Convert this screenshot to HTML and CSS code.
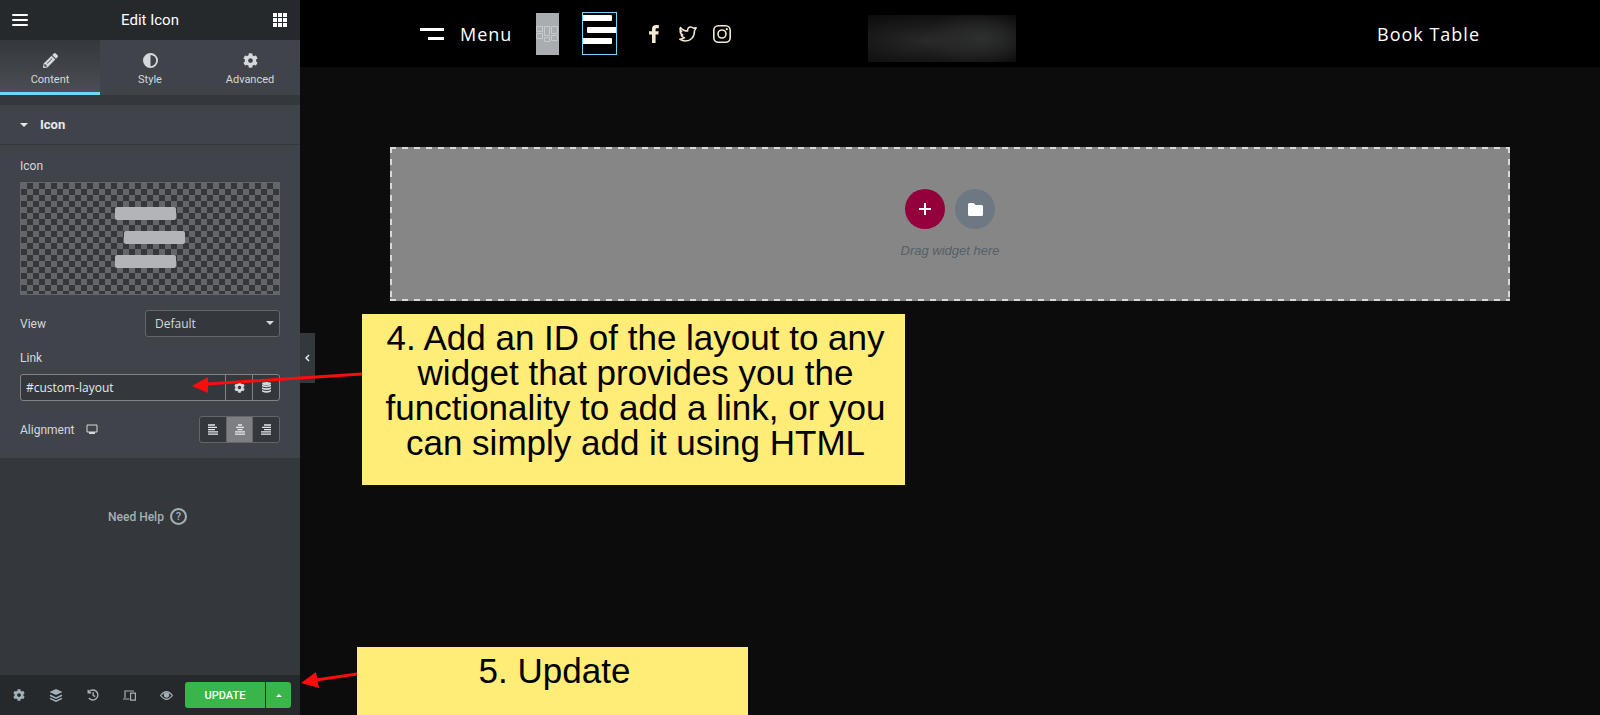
FILE: index.html
```html
<!DOCTYPE html>
<html lang="en">
<head>
  <meta charset="UTF-8">
  <meta name="viewport" content="width=device-width, initial-scale=1.0">
  <title>Edit Icon</title>
  <link rel="stylesheet" href="styles.css">
</head>
<body>
  <!-- shared icons -->
  <svg class="defs" aria-hidden="true">
    <symbol id="i-gear" viewBox="0 0 512 512"><path d="M487.4 315.7l-42.600-24.600c4.300-23.200 4.300-47 0-70.200l42.600-24.600c4.900-2.800 7.100-8.600 5.500-14-11.100-35.600-30-67.800-54.700-94.600-3.800-4.100-10-5.100-14.800-2.300L380.800 110c-17.900-15.400-38.500-27.300-60.800-35.100V25.800c0-5.600-3.900-10.500-9.400-11.700-36.700-8.200-74.300-7.800-109.200 0-5.500 1.200-9.400 6.100-9.400 11.700V75c-22.200 7.900-42.800 19.800-60.800 35.100L88.700 85.500c-4.900-2.800-11-1.900-14.800 2.300-24.700 26.700-43.600 58.900-54.700 94.600-1.700 5.400.6 11.200 5.500 14L67.300 221c-4.300 23.200-4.300 47 0 70.200l-42.600 24.600c-4.900 2.800-7.100 8.600-5.500 14 11.100 35.600 30 67.800 54.700 94.600 3.800 4.100 10 5.100 14.800 2.300l42.600-24.600c17.900 15.400 38.500 27.300 60.800 35.100v49.200c0 5.600 3.900 10.500 9.400 11.700 36.700 8.200 74.300 7.800 109.200 0 5.500-1.200 9.400-6.100 9.400-11.700v-49.200c22.200-7.900 42.800-19.800 60.800-35.100l42.600 24.600c4.900 2.800 11 1.900 14.800-2.300 24.700-26.700 43.600-58.900 54.700-94.600 1.500-5.500-.7-11.300-5.600-14.100zM256 336c-44.100 0-80-35.900-80-80s35.900-80 80-80 80 35.900 80 80-35.900 80-80 80z"/></symbol>
  </svg>

  <div class="editor">
    <aside class="panel">
      <header class="panel-header">
        <button class="icon-btn" aria-label="Menu">
          <svg width="16" height="12" viewBox="0 0 16 12"><path d="M1 1h14M1 6h14M1 11h14" stroke="#fff" stroke-width="2" stroke-linecap="round"/></svg>
        </button>
        <h1>Edit Icon</h1>
        <button class="icon-btn" aria-label="Widgets">
          <svg width="14" height="14" viewBox="0 0 14 14"><path d="M0 0h4v4H0zM5 0h4v4H5zM10 0h4v4h-4zM0 5h4v4H0zM5 5h4v4H5zM10 5h4v4h-4zM0 10h4v4H0zM5 10h4v4H5zM10 10h4v4h-4z"/></svg>
        </button>
      </header>

      <nav class="tabs">
        <button class="tab active">
          <svg width="15" height="15" viewBox="0 0 512 512"><path d="M498 142l-46 46c-5 5-12 5-17 0L324 77c-5-5-5-12 0-17l46-46c19-19 49-19 68 0l60 60c19 19 19 49 0 68zm-214-42L22 362 .3 484c-3 16 11 31 28 28l122-21 262-262c5-5 5-12 0-17L301 100c-5-5-12-5-17 0zM134 350l170-170 14 14-170 170zM88 424h48v36l-65 12-31-31 12-65h36z" fill-rule="evenodd"/></svg>
          Content
        </button>
        <button class="tab">
          <svg width="15" height="15" viewBox="0 0 16 16"><path fill-rule="evenodd" d="M8 0a8 8 0 1 0 0 16A8 8 0 0 0 8 0zm0 14V2a6 6 0 0 1 0 12z"/></svg>
          Style
        </button>
        <button class="tab">
          <svg width="15" height="15"><use href="#i-gear"/></svg>
          Advanced
        </button>
      </nav>

      <button class="section-title">
        <svg width="8" height="4" viewBox="0 0 8 4"><path d="M0 0h8L4 4z"/></svg>
        Icon
      </button>

      <div class="controls">
        <div class="label">Icon</div>
        <div class="media">
          <svg width="70" height="61" viewBox="0 0 70 61" fill="#b3b4b7"><rect width="61" height="13" rx="2"/><rect x="9" y="24" width="61" height="13" rx="2"/><rect y="48" width="61" height="13" rx="2"/></svg>
        </div>

        <div class="control-row">
          <label for="view">View</label>
          <div class="select-wrap">
            <select id="view"><option>Default</option></select>
            <svg width="8" height="4" viewBox="0 0 8 4"><path d="M0 0h8L4 4z"/></svg>
          </div>
        </div>

        <label class="label" for="link">Link</label>
        <div class="link-box">
          <input id="link" type="text" value="#custom-layout">
          <button aria-label="Link options"><svg width="11" height="11"><use href="#i-gear"/></svg></button>
          <button aria-label="Dynamic tags"><svg width="9" height="11" viewBox="0 0 9 11"><ellipse cx="4.500" cy="1.500" rx="4.500" ry="1.500"/><path d="M0 2.500q4.500 2 9 0v1.700q-4.500 2-9 0zM0 5.200q4.500 2 9 0v1.700q-4.500 2-9 0zM0 7.900q4.500 2 9 0v1.600q-4.500 2.600-9 0z"/></svg></button>
        </div>

        <div class="control-row">
          <span class="device-label">Alignment
            <svg width="12" height="11" viewBox="0 0 12 11"><path d="M1 1h10v7H1z" fill="none" stroke="#d5d8dc"/><path d="M3 8h6v2H3z"/></svg>
          </span>
          <div class="align-group">
            <button aria-label="Left"><svg width="12" height="11" viewBox="0 0 12 11"><path d="M1 1h7M1 3.300h9M1 5.600h7M1 7.900h10M1 10.200h10"/></svg></button>
            <button class="on" aria-label="Center"><svg width="12" height="11" viewBox="0 0 12 11"><path d="M4 1h4M2 3.300h8M3.500 5.600h5M1 7.900h10M1 10.200h10"/></svg></button>
            <button aria-label="Right"><svg width="12" height="11" viewBox="0 0 12 11"><path d="M4 1h7M2 3.300h9M4 5.600h7M1 7.900h10M1 10.200h10"/></svg></button>
          </div>
        </div>
      </div>

      <a class="help" href="#">Need Help <span>?</span></a>

      <footer class="panel-footer">
        <button class="tool" aria-label="Settings"><svg width="12" height="12"><use href="#i-gear"/></svg></button>
        <button class="tool" aria-label="Navigator"><svg width="14" height="13" viewBox="0 0 14 13"><path d="M7 0l6.500 3L7 6 .5 3z"/><path d="M1 6.300l6 2.800 6-2.800M1 9.400l6 2.800 6-2.800" fill="none" stroke="#a4afb7" stroke-width="1.500"/></svg></button>
        <button class="tool" aria-label="History"><svg width="12" height="12" viewBox="0 0 12 12" fill="none" stroke="#a4afb7" stroke-width="1.400"><path d="M1.700 3.200a5 5 0 1 1 .2 5.800M1.200.8v3h3M6.200 3.200v3.200l2 1.300"/></svg></button>
        <button class="tool" aria-label="Responsive"><svg width="13" height="11" viewBox="0 0 13 11" fill="none" stroke="#a4afb7" stroke-width="1.200"><path d="M2 8V1h9M0 9h6.500M7.600 3.200h4.800v7H7.600z"/></svg></button>
        <button class="tool" aria-label="Preview"><svg width="13" height="9" viewBox="0 0 13 9"><path d="M.6 4.500Q6.500-3.300 12.400 4.500 6.500 12.300.6 4.500z" fill="none" stroke="#a4afb7" stroke-width="1.200"/><circle cx="6.500" cy="4" r="2.700"/></svg></button>
        <button class="update">UPDATE</button>
        <button class="update-more" aria-label="Save options"><svg width="6" height="3" viewBox="0 0 6 3"><path d="M0 3h6L3 0z"/></svg></button>
      </footer>
    </aside>

    <main class="preview">
      <header class="site-header">
        <div class="site-left">
          <a class="menu-link" href="#">
            <svg width="24" height="12" viewBox="0 0 24 12"><path d="M0 0h24v3H0zM8 9h16v3H8z"/></svg>
            Menu
          </a>
          <div class="widget-handle">
            <svg width="23" height="18" viewBox="0 0 23 18" fill="none" stroke="#c6cace"><path d="M.5 1.500h6v5h-6zM.5 8.500h6v5h-6zM8.500 1.500h5v9h-5zM8.500 12.500h5v4h-5zM15.500 1.500h6v7h-6zM15.500 10.500h6v5h-6z"/></svg>
          </div>
          <a class="icon-widget" href="#custom-layout" aria-label="Custom layout">
            <svg width="33" height="32" viewBox="0 0 33 32"><rect x="-2" y="2" width="31" height="6" rx="1"/><rect x="4" y="14" width="31" height="6" rx="1"/><rect x="-2" y="25" width="31" height="6" rx="1"/></svg>
          </a>
          <div class="social">
            <a href="#" aria-label="Facebook"><svg width="20" height="20" viewBox="0 0 20 20"><path d="M8 19v-8.500H5V7.300h3V5c0-3 1.600-4 4-4h2.800v3.200H13c-1 0-1.400.4-1.400 1.300v1.800h3.100l-.4 3.200h-2.700V19z"/></svg></a>
            <a href="#" aria-label="Twitter"><svg width="20" height="20" viewBox="0 0 20 20" fill="none" stroke="#f3ead3" stroke-width="1.500" stroke-linejoin="round"><path d="M2.400 3.500c2 2.400 4.300 3.600 7.300 3.600C9.200 4.500 10.800 3 12.700 3c1.200 0 2.200.5 2.900 1.300l2.600-.6-1.800 3.300C16.700 13 12.500 17 7.500 17c-2.200 0-4.200-.6-5.800-1.800 2.200 0 3.600-.5 4.800-1.500-1.900-.3-2.900-1.400-3.300-2.700h1.500C3 10 2 8.500 2.200 7.200l1.500.4C2.200 6.500 1.600 5 2.400 3.500z"/></svg></a>
            <a href="#" aria-label="Instagram"><svg width="20" height="20" viewBox="0 0 20 20"><rect x="1.800" y="1.800" width="16.400" height="16.400" rx="4.500" fill="none" stroke="#f3ead3" stroke-width="1.600"/><circle cx="10" cy="10" r="4" fill="none" stroke="#f3ead3" stroke-width="1.600"/><circle cx="14.800" cy="5.200" r="1.100"/></svg></a>
          </div>
        </div>
        <div class="logo"></div>
        <a class="book" href="#">Book Table</a>
      </header>

      <section class="drop-zone">
        <div class="drop-buttons">
          <button class="add" aria-label="Add section"><svg width="12" height="12" viewBox="0 0 12 12"><path d="M5 0h2v5h5v2H7v5H5V7H0V5h5z"/></svg></button>
          <button class="folder" aria-label="Add template"><svg width="15" height="13" viewBox="0 0 15 13"><path d="M1.500 0h4l2 2h6A1.500 1.500 0 0 1 15 3.500v8a1.500 1.500 0 0 1-1.500 1.500h-12A1.500 1.500 0 0 1 0 11.500v-10A1.500 1.500 0 0 1 1.500 0z"/></svg></button>
        </div>
        <p>Drag widget here</p>
      </section>

      <button class="collapse" aria-label="Hide panel"><svg width="5" height="8" viewBox="0 0 5 8"><path d="M4 1L1 4l3 3" fill="none" stroke="#e6e9ec" stroke-width="1.500"/></svg></button>

      <div class="note note-link">4. Add an ID of the layout to any widget that provides you the functionality to add a link, or you can simply add it using HTML
        <svg class="arrow" width="170" height="26" viewBox="0 0 170 26"><path d="M170 6L15 16" stroke="#f90d0d" stroke-width="3"/><path d="M0 18L16 9v16z"/></svg>
      </div>
      <div class="note note-update">5. Update
        <svg class="arrow" width="56" height="20" viewBox="0 0 56 20"><path d="M56 5L15 11" stroke="#f90d0d" stroke-width="3"/><path d="M0 14L15 3l3 16z"/></svg>
      </div>
    </main>
  </div>
</body>
</html>
```
FILE: styles.css
```css
* { box-sizing: border-box; }
body { margin: 0; background: #0c0c0c; font-family: Roboto, "Liberation Sans", sans-serif; font-size: 12px; color: #d5d8dc; }
button { border: 0; padding: 0; margin: 0; background: none; color: inherit; font: inherit; cursor: pointer; }
a { color: inherit; text-decoration: none; }
svg { display: block; }
svg:not([fill]) { fill: currentColor; }
.defs { position: absolute; width: 0; height: 0; }

.editor { display: flex; height: 100vh; overflow: hidden; }

/* panel */
.panel { width: 300px; flex: none; display: flex; flex-direction: column; background: #34383c; }
.panel-header { height: 40px; flex: none; display: flex; align-items: center; justify-content: space-between; padding: 0 12px; background: #26292c; color: #fff; }
.panel-header h1 { margin: 0; font-size: 15px; font-weight: 400; }
.icon-btn { width: 16px; height: 40px; display: flex; align-items: center; justify-content: center; }

.tabs { display: flex; flex: none; height: 55px; margin-bottom: 10px; background: #404349; }
.tab { flex: 1; display: flex; flex-direction: column; align-items: center; gap: 5px; padding-top: 13px; font-size: 11px; line-height: 14px; border-bottom: 3px solid transparent; }
.tab.active { background: linear-gradient(#34383c, #4b4f55); border-bottom-color: #71d7f7; }

.section-title { display: flex; align-items: center; gap: 12px; flex: none; height: 40px; padding: 0 20px; background: #404349; border-bottom: 1px solid #34383c; font-size: 13px; font-weight: 700; color: #e6e9ec; }
.controls { flex: none; padding: 13px 20px 15px; background: #404349; }
.label { display: block; height: 16px; line-height: 16px; margin-bottom: 8px; }
.media { display: flex; align-items: center; justify-content: center; height: 113px; padding-bottom: 2px; border: 1px solid #64666a; background: repeating-conic-gradient(#34383c 0 25%, #64666a 0 50%) 0 0 / 12px 12px; }
.control-row { display: flex; align-items: center; justify-content: space-between; margin: 15px 0 13px; }
.controls > :last-child { margin-bottom: 0; }

.select-wrap { position: relative; width: 135px; }
.select-wrap svg { position: absolute; right: 6px; top: 11px; pointer-events: none; }
select { appearance: none; width: 100%; height: 27px; padding: 0 9px; border: 1px solid #64666a; border-radius: 3px; background: #34383c; color: #d5d8dc; font-family: "Open Sans", sans-serif; font-size: 12px; }
.link-box { display: flex; height: 27px; border: 1px solid #818388; border-radius: 3px; background: #34383c; overflow: hidden; }
.link-box input { flex: 1; min-width: 0; border: 0; padding: 0 5px; background: none; color: #e6e9ec; font-family: "Open Sans", sans-serif; font-size: 12px; }
.link-box button { width: 27px; display: flex; align-items: center; justify-content: center; border-left: 1px solid #818388; }
.device-label { display: flex; align-items: center; gap: 12px; }
.align-group { display: flex; width: 81px; height: 27px; border: 1px solid #64666a; border-radius: 3px; background: #34383c; overflow: hidden; }
.align-group button { flex: 1; display: flex; align-items: center; justify-content: center; }
.align-group button + button { border-left: 1px solid #64666a; }
.align-group path { stroke: #e6e9ec; stroke-width: 1.3; }
.align-group .on { background: #7d7f83; }

.help { display: flex; align-items: center; justify-content: center; gap: 6px; margin: 50px 0 auto; padding-right: 5px; font-weight: 500; color: #a9aeb3; }
.help span { width: 17px; height: 17px; border: 2px solid #a4afb7; border-radius: 50%; text-align: center; font-size: 11px; line-height: 13px; }

.panel-footer { display: flex; align-items: center; flex: none; height: 40px; padding-right: 9px; background: #26292c; color: #a4afb7; }
.tool { flex: 1; height: 40px; display: flex; align-items: center; justify-content: center; }
.update { width: 80px; height: 26px; margin-right: 1px; border-radius: 3px 0 0 3px; background: #39b54a; color: #fff; font-size: 11px; font-weight: 500; }
.update-more { width: 25px; height: 26px; display: flex; align-items: center; justify-content: center; border-radius: 0 3px 3px 0; background: #39b54a; color: #fff; }

/* preview */
.preview { position: relative; flex: 1; min-width: 0; }
.site-header { display: grid; grid-template-columns: 1fr auto 1fr; align-items: center; height: 67px; padding: 0 120px; background: #000; color: #fff; }
.site-left { display: flex; align-items: center; }
.menu-link, .book { font-family: "Open Sans", sans-serif; font-size: 18px; letter-spacing: 1px; }
.menu-link { display: flex; align-items: center; gap: 16px; }
.book { justify-self: end; }
.widget-handle { display: flex; align-items: center; width: 23px; height: 42px; margin-left: 24px; background: #a9adb1; }
.icon-widget { width: 35px; height: 43px; margin-left: 23px; border: 1px solid #71d7f7; }
.social { display: flex; gap: 14px; margin-left: 27px; color: #f3ead3; }
.logo { width: 148px; height: 47px; margin: 10px 16px 0 0; background: radial-gradient(ellipse 60px 30px at 77% 50%, #2e302f, transparent), radial-gradient(ellipse 110px 32px at 40% 55%, #292929, #0a0a0a); }

/* long dashes, so the frame is painted with gradients */
.drop-zone {
  height: 154px;
  margin: 80px 90px 0;
  padding-top: 42px;
  background:
    repeating-linear-gradient(90deg, #d5dadf 0 6px, transparent 6px 12px) top / 100% 2px no-repeat,
    repeating-linear-gradient(90deg, #d5dadf 0 6px, transparent 6px 12px) bottom / 100% 2px no-repeat,
    repeating-linear-gradient(#d5dadf 0 6px, transparent 6px 12px) left / 2px 100% no-repeat,
    repeating-linear-gradient(#d5dadf 0 6px, transparent 6px 12px) right / 2px 100% no-repeat,
    #868686;
  text-align: center;
}
.drop-buttons { display: flex; justify-content: center; gap: 10px; }
.drop-buttons button { width: 40px; height: 40px; display: flex; align-items: center; justify-content: center; border-radius: 50%; color: #fff; }
.drop-buttons .add { background: #93003c; }
.drop-buttons .folder { background: #6d7882; }
.drop-zone p { margin: 14px 0 0; font: italic 13px/16px "Liberation Sans", sans-serif; color: #556068; }

.collapse { position: absolute; left: 0; top: 333px; width: 15px; height: 50px; display: flex; align-items: center; justify-content: center; background: #34383c; }

/* notes over the canvas */
.note { position: absolute; background: #ffed77; color: #000; text-align: center; font: 35px/35px "Liberation Sans", sans-serif; padding: 6px 16px 0 20px; }
.note-link { left: 62px; top: 314px; width: 543px; height: 171px; }
.note-update { left: 57px; top: 647px; width: 391px; bottom: 0; }
.arrow { position: absolute; right: 100%; color: #f90d0d; }
.note-link .arrow { top: 54px; }
.note-update .arrow { top: 22px; }
```
